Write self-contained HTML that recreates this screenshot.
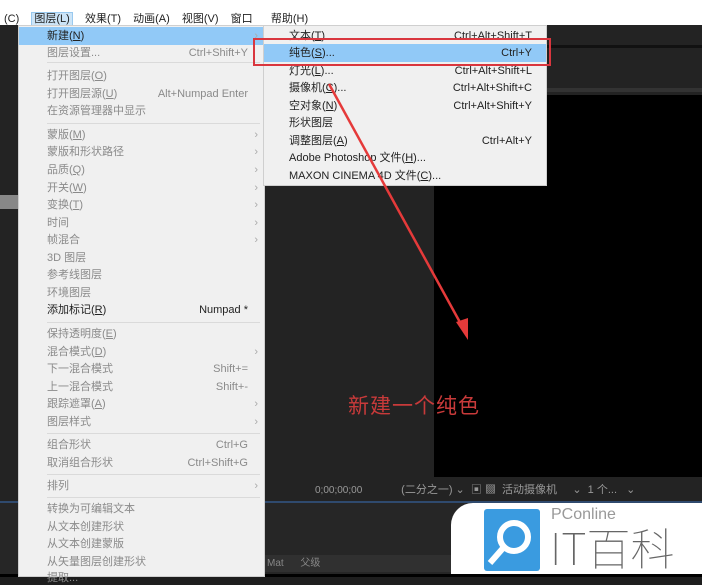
<!DOCTYPE html>
<html><head><meta charset="utf-8"><style>
*{margin:0;padding:0;box-sizing:border-box}
body{width:702px;height:577px;overflow:hidden;position:relative;background:#1e1e1e;font-family:"Liberation Sans","Noto Sans CJK SC",sans-serif;font-size:11px}
.a{position:absolute}
.m{position:absolute;left:18px;top:25px;width:247px;height:552px;background:#f0f0f0;border:1px solid #cfcfcf}
.i{position:absolute;left:28px;color:#8a8a8a;white-space:nowrap;line-height:14px}
.k{position:absolute;right:16px;color:#8a8a8a;line-height:14px}
.c{position:absolute;right:6px;color:#aaa;line-height:14px}
.d{color:#222}
.s{position:absolute;left:28px;right:4px;height:1px;background:#dadada}
.sm{position:absolute;left:263px;top:25px;width:284px;height:161px;background:#f0f0f0;border:1px solid #cfcfcf}
.sm .i{left:25px;color:#222}.sm .k{color:#222;right:14px}
u{text-decoration:underline}
</style></head><body>
<div class="a" style="left:0;top:0;width:702px;height:8px;background:#fff"></div>
<div class="a" style="left:0;top:8px;width:702px;height:17px;background:#fff"></div>
<div class="a" style="left:4px;top:10px;color:#222;font-size:11px;white-space:nowrap;word-spacing:3px">(C)&nbsp; <span style="background:#cce4f7;border:1px solid #99c9ef;padding:0 2px">图层(L)</span>&nbsp; 效果(T)&nbsp; 动画(A)&nbsp; 视图(V)&nbsp; 窗口&nbsp;&nbsp; 帮助(H)</div>
<div class="a" style="left:0;top:25px;width:18px;height:552px;background:#232323"></div>
<div class="a" style="left:0;top:195px;width:18px;height:14px;background:#888"></div>
<div class="a" style="left:265px;top:25px;width:437px;height:455px;background:#232323"></div>
<div class="a" style="left:434px;top:95px;width:268px;height:382px;background:#000"></div>
<div class="a" style="left:547px;top:45px;width:155px;height:3px;background:#111"></div>
<div class="a" style="left:547px;top:88px;width:155px;height:4px;background:#333"></div>
<div class="a" style="left:265px;top:480px;width:437px;height:21px;background:#232323;color:#999;font-size:10px;line-height:21px;white-space:nowrap;padding-left:50px">0;00;00;00 &nbsp;&nbsp;&nbsp;&nbsp;&nbsp;&nbsp;&nbsp;&nbsp;&nbsp;&nbsp;&nbsp;&nbsp; <span style="font-size:11px">(二分之一) ⌄ &nbsp;▣ ▩ &nbsp;活动摄像机 &nbsp;&nbsp;&nbsp; ⌄ &nbsp;1 个... &nbsp; ⌄</span></div>
<div class="a" style="left:0;top:501px;width:702px;height:2px;background:#2f4a6e"></div>
<div class="a" style="left:0;top:503px;width:702px;height:71px;background:#262626"></div>
<div class="a" style="left:265px;top:555px;width:240px;height:17px;background:#303030;color:#888;font-size:10px;line-height:17px;padding-left:2px">Mat &nbsp;&nbsp;&nbsp;&nbsp; 父级</div>
<div class="a" style="left:0;top:574px;width:702px;height:3px;background:#000"></div>
<div class="a" style="left:451px;top:503px;width:251px;height:71px;background:#fff;border-top-left-radius:22px"></div>
<div class="a" style="left:484px;top:509px;width:56px;height:62px;background:#3a9be0;border-radius:3px"></div>
<svg class="a" style="left:484px;top:509px" width="60" height="62"><circle cx="30" cy="28" r="14" fill="none" stroke="#fff" stroke-width="6"/><line x1="20" y1="38" x2="6" y2="54" stroke="#fff" stroke-width="6"/></svg>
<div class="a" style="left:551px;top:506px;color:#999;font-size:16px">PConline</div>
<div class="a" style="left:550px;top:522px;color:#666;font-size:44px;line-height:48px;font-weight:100;font-family:'Noto Sans CJK SC',sans-serif">IT百科</div>

<div class="m">
<div class="a" style="left:0;top:1px;width:245px;height:18px;background:#91c9f7"></div>
<div class="i d" style="top:3px">新建(<u>N</u>)</div><div class="c" style="top:3px">›</div>
<div class="i" style="top:20px">图层设置...</div><div class="k" style="top:20px">Ctrl+Shift+Y</div>
<div class="s" style="top:36px"></div>
<div class="i" style="top:43px">打开图层(<u>O</u>)</div>
<div class="i" style="top:61px">打开图层源(<u>U</u>)</div><div class="k" style="top:61px">Alt+Numpad Enter</div>
<div class="i" style="top:78px">在资源管理器中显示</div>
<div class="s" style="top:97px"></div>
<div class="i" style="top:102px">蒙版(<u>M</u>)</div><div class="c" style="top:102px">›</div>
<div class="i" style="top:119px">蒙版和形状路径</div><div class="c" style="top:119px">›</div>
<div class="i" style="top:137px">品质(<u>Q</u>)</div><div class="c" style="top:137px">›</div>
<div class="i" style="top:155px">开关(<u>W</u>)</div><div class="c" style="top:155px">›</div>
<div class="i" style="top:172px">变换(<u>T</u>)</div><div class="c" style="top:172px">›</div>
<div class="i" style="top:190px">时间</div><div class="c" style="top:190px">›</div>
<div class="i" style="top:207px">帧混合</div><div class="c" style="top:207px">›</div>
<div class="i" style="top:225px">3D 图层</div>
<div class="i" style="top:242px">参考线图层</div>
<div class="i" style="top:260px">环境图层</div>
<div class="i d" style="top:277px">添加标记(<u>R</u>)</div><div class="k d" style="top:277px">Numpad *</div>
<div class="s" style="top:296px"></div>
<div class="i" style="top:301px">保持透明度(<u>E</u>)</div>
<div class="i" style="top:319px">混合模式(<u>D</u>)</div><div class="c" style="top:319px">›</div>
<div class="i" style="top:336px">下一混合模式</div><div class="k" style="top:336px">Shift+=</div>
<div class="i" style="top:354px">上一混合模式</div><div class="k" style="top:354px">Shift+-</div>
<div class="i" style="top:371px">跟踪遮罩(<u>A</u>)</div><div class="c" style="top:371px">›</div>
<div class="i" style="top:389px">图层样式</div><div class="c" style="top:389px">›</div>
<div class="s" style="top:407px"></div>
<div class="i" style="top:412px">组合形状</div><div class="k" style="top:412px">Ctrl+G</div>
<div class="i" style="top:430px">取消组合形状</div><div class="k" style="top:430px">Ctrl+Shift+G</div>
<div class="s" style="top:448px"></div>
<div class="i" style="top:453px">排列</div><div class="c" style="top:453px">›</div>
<div class="s" style="top:471px"></div>
<div class="i" style="top:476px">转换为可编辑文本</div>
<div class="i" style="top:494px">从文本创建形状</div>
<div class="i" style="top:511px">从文本创建蒙版</div>
<div class="i" style="top:529px">从矢量图层创建形状</div>
<div class="i" style="top:545px">提取...</div>
</div>

<div class="sm">
<div class="a" style="left:0;top:18px;width:282px;height:18px;background:#91c9f7"></div>
<div class="i" style="top:3px">文本(<u>T</u>)</div><div class="k" style="top:3px">Ctrl+Alt+Shift+T</div>
<div class="i" style="top:20px">纯色(<u>S</u>)...</div><div class="k" style="top:20px">Ctrl+Y</div>
<div class="i" style="top:38px">灯光(<u>L</u>)...</div><div class="k" style="top:38px">Ctrl+Alt+Shift+L</div>
<div class="i" style="top:55px">摄像机(<u>C</u>)...</div><div class="k" style="top:55px">Ctrl+Alt+Shift+C</div>
<div class="i" style="top:73px">空对象(<u>N</u>)</div><div class="k" style="top:73px">Ctrl+Alt+Shift+Y</div>
<div class="i" style="top:90px">形状图层</div>
<div class="i" style="top:108px">调整图层(<u>A</u>)</div><div class="k" style="top:108px">Ctrl+Alt+Y</div>
<div class="i" style="top:125px">Adobe Photoshop 文件(<u>H</u>)...</div>
<div class="i" style="top:143px">MAXON CINEMA 4D 文件(<u>C</u>)...</div>
</div>
<div class="a" style="left:253px;top:38px;width:298px;height:28px;border:2px solid #d9363e"></div>
<svg class="a" style="left:0;top:0" width="702" height="577"><line x1="329" y1="84" x2="462" y2="326" stroke="#e53a3a" stroke-width="2.5"/><polygon points="468,340 456,322 468,318" fill="#e53a3a"/></svg>
<div class="a" style="left:348px;top:390px;color:#c83a3a;font-size:21px;font-family:'Noto Sans CJK SC',sans-serif;letter-spacing:1px">新建一个纯色</div>
</body></html>
